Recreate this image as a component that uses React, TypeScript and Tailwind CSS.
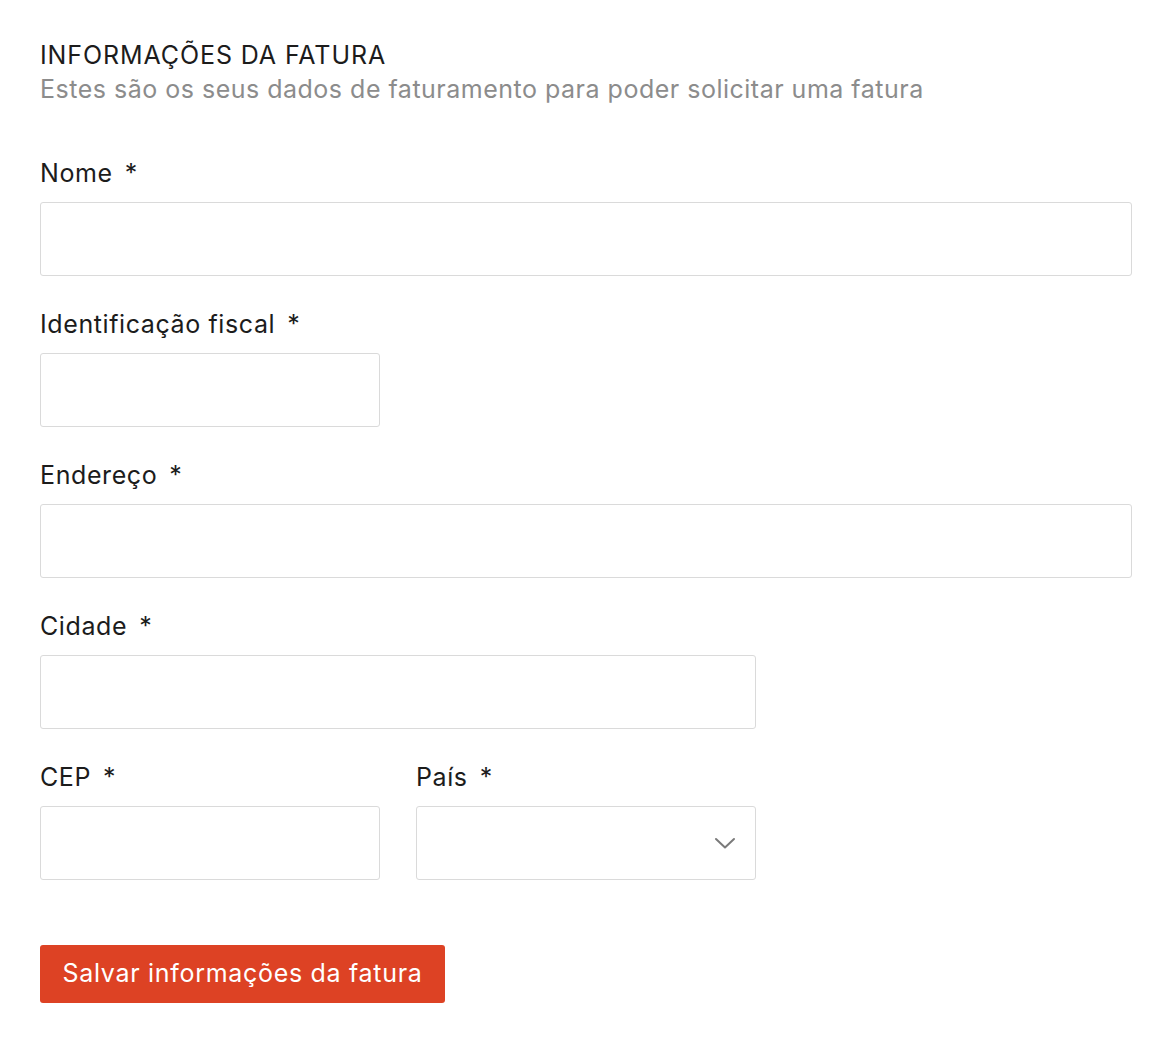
function Field({
  label,
  width,
  select,
}: {
  label: string;
  width: string;
  select?: boolean;
}) {
  return (
    <div className="mb-[30px] flex flex-col">
      <label className="h-[36px] text-[25px] leading-[36px] tracking-[0.6px] text-[#1c1c1c]">
        {label}
        <span className="ml-[12px]">*</span>
      </label>
      <div
        className={`relative mt-[11px] h-[74px] rounded-[3px] border border-[#dadada] bg-white ${width}`}
      >
        {select && (
          <svg
            className="absolute right-[19px] top-[29px]"
            width="22"
            height="14"
            viewBox="0 0 22 14"
            fill="none"
            stroke="#7a7a7a"
            strokeWidth="2"
            strokeLinecap="round"
            strokeLinejoin="round"
          >
            <polyline points="2,3 11,11.5 20,3" />
          </svg>
        )}
      </div>
    </div>
  );
}

export default function App() {
  return (
    <div
      className="min-h-screen bg-white px-[40px] pt-[38px]"
      style={{ fontFamily: 'Inter, "Noto Sans", sans-serif' }}
    >
      <h1 className="text-[25px] leading-[34px] font-normal tracking-[0.9px] text-[#1c1c1c]">
        INFORMAÇÕES DA FATURA
      </h1>
      <p className="text-[25px] leading-[34px] tracking-[0.5px] text-[#8c8c8c]">
        Estes são os seus dados de faturamento para poder solicitar uma fatura
      </p>

      <form className="mt-[49px] w-[1092px]">
        <Field label="Nome" width="w-[1092px]" />
        <Field label="Identificação fiscal" width="w-[340px]" />
        <Field label="Endereço" width="w-[1092px]" />
        <Field label="Cidade" width="w-[716px]" />
        <div className="flex gap-[36px]">
          <Field label="CEP" width="w-[340px]" />
          <Field label="País" width="w-[340px]" select />
        </div>

        <button
          type="button"
          className="mt-[35px] h-[58px] w-[405px] rounded-[3px] bg-[#dd4224] text-[25px] tracking-[0.7px] text-white"
        >
          Salvar informações da fatura
        </button>
      </form>
    </div>
  );
}
